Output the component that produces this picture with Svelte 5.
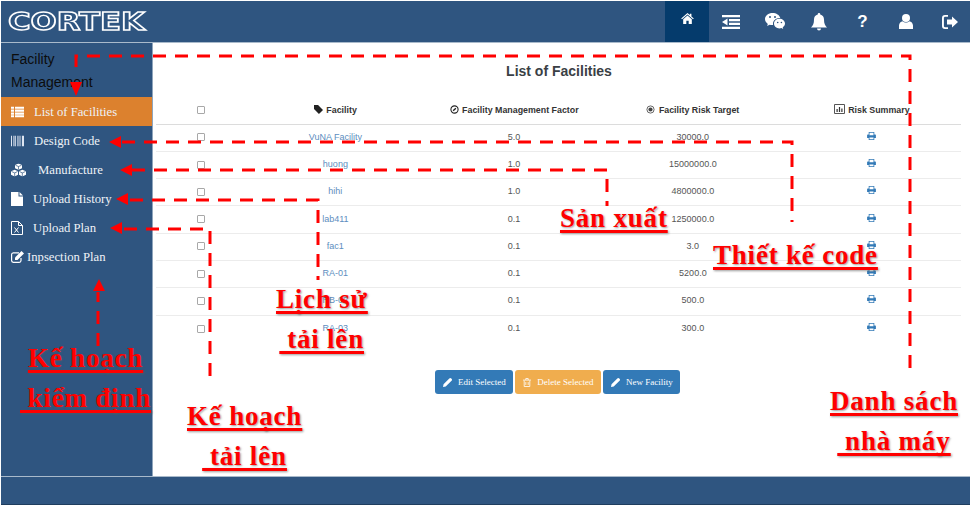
<script>
  const rows = [
    ['VuNA Facility', '5.0', '30000.0'],
    ['huong', '1.0', '15000000.0'],
    ['hihi', '1.0', '4800000.0'],
    ['lab411', '0.1', '1250000.0'],
    ['fac1', '0.1', '3.0'],
    ['RA-01', '0.1', '5200.0'],
    ['RB-02', '0.1', '500.0'],
    ['RA-03', '0.1', '300.0']
  ];
  const dashes = [
    'M910 368V56H76V72',
    'M122 142H792V222',
    'M132 170H607V206',
    'M130 200H318V280',
    'M124 229H210V382',
    'M98 346V292'
  ];
  const arrows = [
    '70 82 82 82 76 96',
    '121 136 121 148 109 142',
    '132 164 132 176 120 170',
    '128 193 128 205 116 199',
    '122 222 122 234 110 228',
    '93 291 105 291 99 279'
  ];
</script>

<div class="page">
  <header class="topbar">
    <div class="logo">CORTEK</div>
    <nav class="topnav">
      <a class="tab active" aria-label="Home">
        <svg viewBox="0 0 16 14" width="13" height="11"><path fill="#fff" d="M8 0 0 7l1 1 7-6 7 6 1-1-3-2.6V1h-2v1.700zM8 3.200 2.500 8v6H6.500V10h3v4h4V8z"/></svg>
      </a>
      <a class="tab" aria-label="Menu">
        <svg viewBox="0 0 18 14" width="18" height="14"><path fill="#fff" d="M0 0h18v2.300H0zM7 3.900h11v2.300H7zM7 7.800h11v2.300H7zM0 11.700h18V14H0zM5.500 3.500v7L0 7z"/></svg>
      </a>
      <a class="tab" aria-label="Chat">
        <svg viewBox="0 0 20 18" width="20" height="18"><path fill="#fff" d="M7.500 0C3.400 0 0 2.700 0 6.100c0 2 1.100 3.600 2.800 4.800L2.100 13l2.500-1.300c.9.200 1.800.4 2.800.4h.7A5.200 5.200 0 0 1 8 10.600c0-3.200 2.900-5.700 6.600-5.700h.7C14.500 2.100 11.300 0 7.500 0z"/><path fill="#fff" d="M20 10.600c0-2.700-2.600-4.800-5.500-4.800-3.100 0-5.500 2.100-5.500 4.800s2.400 4.800 5.500 4.800c.6 0 1.300-.2 1.900-.3l1.800 1-.5-1.600c1.300-1 2.300-2.300 2.300-3.900z"/><circle cx="5" cy="4" r="1" fill="#2f5580"/><circle cx="10" cy="4" r="1" fill="#2f5580"/><circle cx="12.700" cy="9.500" r=".8" fill="#2f5580"/><circle cx="16.400" cy="9.500" r=".8" fill="#2f5580"/></svg>
      </a>
      <a class="tab" aria-label="Alerts">
        <svg viewBox="0 0 16 18" width="16" height="18"><path fill="#fff" d="M8 0a1.200 1.200 0 0 0-1.200 1.400C4.300 2 3 4 3 6.500c0 4-1 6.300-3 8h16c-2-1.700-3-4-3-8 0-2.500-1.300-4.500-3.800-5.100A1.200 1.200 0 0 0 8 0zM6 15.500a2 2 0 0 0 4 0z"/></svg>
      </a>
      <a class="tab qmark">?</a>
      <a class="tab" aria-label="Profile">
        <svg viewBox="0 0 14 15" width="14" height="15"><circle cx="7" cy="4" r="4" fill="#fff"/><path fill="#fff" d="M0 15v-3.500C0 9 2 7.600 3.500 7.200c1 .8 2.200 1.300 3.500 1.300s2.500-.5 3.500-1.300C12 7.600 14 9 14 11.500V15z"/></svg>
      </a>
      <a class="tab" aria-label="Sign out">
        <svg viewBox="0 0 16 14" width="16" height="14"><path fill="#fff" d="M6 0H3a3 3 0 0 0-3 3v8a3 3 0 0 0 3 3h3v-1.800H3.200A1.300 1.300 0 0 1 1.900 11V3c0-.7.600-1.300 1.300-1.300H6zM10 1.500V4.500H5v5h5v3L16 7z"/></svg>
      </a>
    </nav>
  </header>

  <div class="body">
    <aside class="sidebar">
      <div class="side-title">Facility<br />Management</div>
      <ul class="menu">
        <li class="item active">
          <svg class="mi" viewBox="0 0 13 11" width="13" height="11"><path fill="#fff" d="M0 0h3v2.300H0zM4 0h9v2.300H4zM0 3h3v2.300H0zM4 3h9v2.300H4zM0 6h3v2.300H0zM4 6h9v2.300H4zM0 8.700h3V11H0zM4 8.700h9V11H4z"/></svg>
          <span class="t34">List of Facilities</span>
        </li>
        <li class="item">
          <svg class="mi" viewBox="0 0 13 11" width="13" height="11"><path fill="#dfe6f2" d="M0 0h1v11H0zM2 0h.6v11H2zM3.500 0h1.300v11H3.500zM6 0h.6v11H6zM7.500 0h1v11h-1zM9.500 0h.6v11h-.6zM11 0h2v11h-2z"/></svg>
          <span class="t34">Design Code</span>
        </li>
        <li class="item">
          <svg class="mi" viewBox="0 0 15 13" width="15" height="13"><path fill="#fff" d="M7.500 0 11 1.500v3.200L7.500 6.300 4 4.700V1.500zM3.700 6.200 7 7.700v3.500L3.700 13 0 11.200V7.700zM11.300 6.200 15 7.700v3.500L11.300 13 8 11.200V7.700z"/><path fill="none" stroke="#2f5580" stroke-width=".7" d="M4.500 1.800 7.500 3l3-1.200M7.500 3v3M.5 8l3.200 1.400L6.600 8M3.700 9.400V13M8.400 8l2.900 1.400L14.500 8M11.300 9.400V13"/></svg>
          <span class="t38">Manufacture</span>
        </li>
        <li class="item">
          <svg class="mi" viewBox="0 0 12 14" width="12" height="14"><path fill="#fff" d="M0 0h7.500v4.500H12V14H0zM8.500 0 12 3.500H8.500z"/></svg>
          <span class="t33">Upload History</span>
        </li>
        <li class="item">
          <svg class="mi" viewBox="0 0 12 14" width="12" height="14"><path fill="none" stroke="#fff" d="M.5.500h7l4 4v9H.5zM7.500.500v4h4"/><path fill="none" stroke="#fff" d="m3.500 6.500 4 5M7.500 6.500l-4 5"/></svg>
          <span class="t33">Upload Plan</span>
        </li>
        <li class="item">
          <svg class="mi" viewBox="0 0 13 12" width="13" height="12"><path fill="none" stroke="#fff" stroke-width="1.200" d="M10 7v2.500A1.800 1.800 0 0 1 8.200 11.300H2.300A1.800 1.800 0 0 1 .6 9.500V3.600A1.800 1.800 0 0 1 2.300 1.800H8"/><path fill="#fff" d="M4 6.500 10.500 0 13 2.500 6.500 9H4z"/></svg>
          <span class="t27">Inpsection Plan</span>
        </li>
      </ul>
    </aside>

    <main class="content">
      <h1 class="title">List of Facilities</h1>
      <table class="grid">
        <thead>
          <tr>
            <th class="c0"><span class="box"></span></th>
            <th class="cn">
              <svg viewBox="0 0 10 10" width="9" height="9"><path fill="#222" d="M0 0h4.500L10 5.500 5.500 10 0 4.500z"/></svg>
              Facility
            </th>
            <th class="cn">
              <svg viewBox="0 0 10 10" width="9" height="9"><circle cx="5" cy="5" r="4" fill="none" stroke="#222" stroke-width="1.200"/><path stroke="#222" stroke-width="1.500" d="m3.500 6.500 3-3"/></svg>
              Facility Management Factor
            </th>
            <th class="cn">
              <svg viewBox="0 0 10 10" width="9" height="9"><circle cx="5" cy="5" r="4" fill="none" stroke="#555" stroke-width="1"/><circle cx="5" cy="5" r="2.300" fill="#444"/></svg>
              Facility Risk Target
            </th>
            <th class="cn">
              <svg viewBox="0 0 11 10" width="11" height="10"><path fill="none" stroke="#555" d="M.5.500h10v9H.5z"/><path fill="#333" d="M2.500 5h1.200v3H2.500zM4.900 3h1.200v5H4.900zM7.300 4.500h1.200V8H7.300z"/></svg>
              Risk Summary
            </th>
          </tr>
        </thead>
        <tbody>
          {#each rows as r}
            <tr>
              <td><span class="box"></span></td>
              <td><a class="link">{r[0]}</a></td>
              <td>{r[1]}</td>
              <td>{r[2]}</td>
              <td>
                <svg viewBox="0 0 11 10" width="9" height="8"><path fill="#337ab7" d="M2 0h7v3.200h1.200A.8.800 0 0 1 11 4v3.500H9V10H2V7.500H0V4a.8.800 0 0 1 .8-.8H2zM3 1v3h5V1zM3 7v2h5V7z"/></svg>
              </td>
            </tr>
          {/each}
        </tbody>
      </table>
      <div class="actions">
        <button class="btn blue">
          <svg viewBox="0 0 10 10" width="9" height="9"><path fill="#fff" d="M0 10l.6-3L7 .6a1.500 1.500 0 0 1 2.200 0l.3.300a1.500 1.500 0 0 1 0 2.100L3 9.400z"/></svg>
          Edit Selected
        </button>
        <button class="btn orange">
          <svg viewBox="0 0 10 11" width="8" height="9"><path fill="none" stroke="#fff" d="M1.500 3v7.500h7V3M0 2.500h10M3.500 2.500V.5h3v2M3.500 5v3.500M6.500 5v3.500"/></svg>
          Delete Selected
        </button>
        <button class="btn blue">
          <svg viewBox="0 0 10 10" width="9" height="9"><path fill="#fff" d="M0 10l.6-3L7 .6a1.500 1.500 0 0 1 2.200 0l.3.300a1.500 1.500 0 0 1 0 2.100L3 9.400z"/></svg>
          New Facility
        </button>
      </div>
    </main>
  </div>

  <footer class="footer"></footer>

  <svg class="overlay" viewBox="0 0 971 510" width="971" height="510">
    {#each dashes as d}
      <path class="dash" d={d} />
    {/each}
    {#each arrows as a}
      <polygon class="head" points={a} />
    {/each}
  </svg>

  <div class="note n-thietke">Thiết kế code</div>
  <div class="note n-sanxuat">Sản xuất</div>
  <div class="note two n-lichsu"><span>Lịch sử</span><span>&nbsp;tải lên</span></div>
  <div class="note two n-kiemdinh"><span>Kế hoạch</span><span>&nbsp;kiểm định</span></div>
  <div class="note two n-tailen"><span>Kế hoạch</span><span>&nbsp;tải lên</span></div>
  <div class="note two n-danhsach"><span>Danh sách</span><span>&nbsp;nhà máy</span></div>
</div>

<style>
  :global(body) {
    margin: 0;
    background: #fff;
  }
  .page {
    position: relative;
    width: 971px;
    height: 510px;
    box-sizing: border-box;
    padding: 1px 1px 0 1px;
    overflow: hidden;
    font-family: "Liberation Sans", Arial, sans-serif;
  }
  .topbar {
    display: flex;
    justify-content: space-between;
    height: 41px;
    background: #2f5580;
    border-bottom: 1px solid #a9bacb;
  }
  .logo {
    padding: 8px 0 0 7px;
    font-family: "DejaVu Sans", sans-serif;
    font-size: 24px;
    font-weight: 700;
    line-height: 26px;
    color: #2f5580;
    -webkit-text-stroke: 1.400px #fff;
    transform: scaleX(1.28);
    transform-origin: 7px 0;
  }
  .topnav {
    display: flex;
    margin-right: -2px;
  }
  .tab {
    display: flex;
    align-items: center;
    justify-content: center;
    width: 43.800px;
    color: #fff;
  }
  .tab.active {
    align-items: flex-start;
    padding-top: 12px;
    box-sizing: border-box;
    background: #053b6c;
  }
  .qmark {
    font-size: 17px;
    font-weight: 700;
  }
  .body {
    display: flex;
    height: 433px;
  }
  .sidebar {
    width: 151px;
    flex: none;
    background: #2f5580;
    border-right: 1px solid #8fa5bc;
  }
  .side-title {
    height: 54px;
    padding: 5px 0 0 10px;
    box-sizing: border-box;
    font-size: 14px;
    line-height: 23px;
    color: #0c0c0c;
  }
  .menu {
    margin: 0;
    padding: 0;
    list-style: none;
  }
  .item {
    position: relative;
    display: flex;
    align-items: center;
    height: 29px;
    font-family: "Liberation Serif", "Times New Roman", serif;
    font-size: 12.700px;
    color: #eef2f7;
  }
  .item span {
    padding-top: 2px;
  }
  .item.active {
    background: #dc812e;
  }
  .mi {
    position: absolute;
    left: 10px;
    top: 50%;
    transform: translateY(-50%);
  }
  .t34 { margin-left: 33px; }
  .t38 { margin-left: 37px; }
  .t33 { margin-left: 32px; }
  .t27 { margin-left: 26px; }
  .content {
    flex: 1;
    min-width: 0;
    padding: 0 8px 0 3px;
    background: #fff;
  }
  .title {
    margin: 0;
    padding-top: 20px;
    height: 55px;
    box-sizing: border-box;
    font-size: 14px;
    line-height: 16px;
    font-weight: 700;
    text-align: center;
    color: #3a3f45;
  }
  .grid {
    width: 805px;
    border-collapse: collapse;
    table-layout: fixed;
    font-size: 9px;
    color: #555;
    text-align: center;
  }
  .c0 { width: 90px; }
  th {
    height: 26px;
    padding: 0 0 2px;
    box-sizing: border-box;
    font-size: 8.850px;
    font-weight: 700;
    color: #333;
    border-bottom: 1.500px solid #dcdcdc;
  }
  th svg {
    vertical-align: -1px;
    margin-right: 1px;
  }
  td {
    height: 27.300px;
    padding: 0 0 2px;
    box-sizing: border-box;
    border-bottom: 1px solid #ececec;
    vertical-align: middle;
  }
  tbody tr:last-child td {
    border-bottom: none;
  }
  .link {
    color: #5d8ec0;
  }
  .box {
    display: inline-block;
    width: 6px;
    height: 6px;
    border: 1px solid #a8a8a8;
    border-radius: 1px;
    background: #fff;
    vertical-align: middle;
  }
  .actions {
    display: flex;
    margin: 28px 0 0 279px;
    gap: 2px;
  }
  .btn {
    display: flex;
    align-items: center;
    gap: 6px;
    height: 24px;
    padding: 0 7.500px 0 8px;
    border: none;
    border-radius: 3px;
    font-family: "Liberation Serif", "Times New Roman", serif;
    font-size: 9px;
    color: #fff;
    white-space: nowrap;
  }
  .blue { background: #337ab7; }
  .orange { background: #f0ad4e; }
  .footer {
    height: 27px;
    background: #2f5580;
    border-top: 1px solid #a9bacb;
    border-bottom: 1px solid #1f3d5e;
  }
  .overlay {
    position: absolute;
    left: 0;
    top: 0;
    pointer-events: none;
  }
  .dash {
    fill: none;
    stroke: #f00;
    stroke-width: 3;
    stroke-dasharray: 13 9;
  }
  .head {
    fill: #f00;
  }
  .note {
    position: absolute;
    font-family: "Liberation Serif", "Times New Roman", serif;
    font-size: 27px;
    font-weight: 700;
    line-height: 40px;
    letter-spacing: 0.800px;
    color: #f00;
    text-decoration: underline;
    text-decoration-thickness: 3px;
    text-decoration-skip-ink: none;
    text-underline-offset: 3px;
    text-shadow: 1px 1px 2px rgba(90, 90, 90, 0.6);
    white-space: nowrap;
  }
  .two {
    display: flex;
    flex-direction: column;
    align-items: center;
  }
  .two span {
    text-decoration: inherit;
  }
  .n-thietke { left: 713px; top: 235px; }
  .n-sanxuat { left: 560px; top: 198px; }
  .n-lichsu { left: 276px; top: 279px; }
  .n-kiemdinh { left: 20px; top: 338px; }
  .n-tailen { left: 187px; top: 396px; }
  .n-danhsach { left: 830px; top: 381px; }
</style>
